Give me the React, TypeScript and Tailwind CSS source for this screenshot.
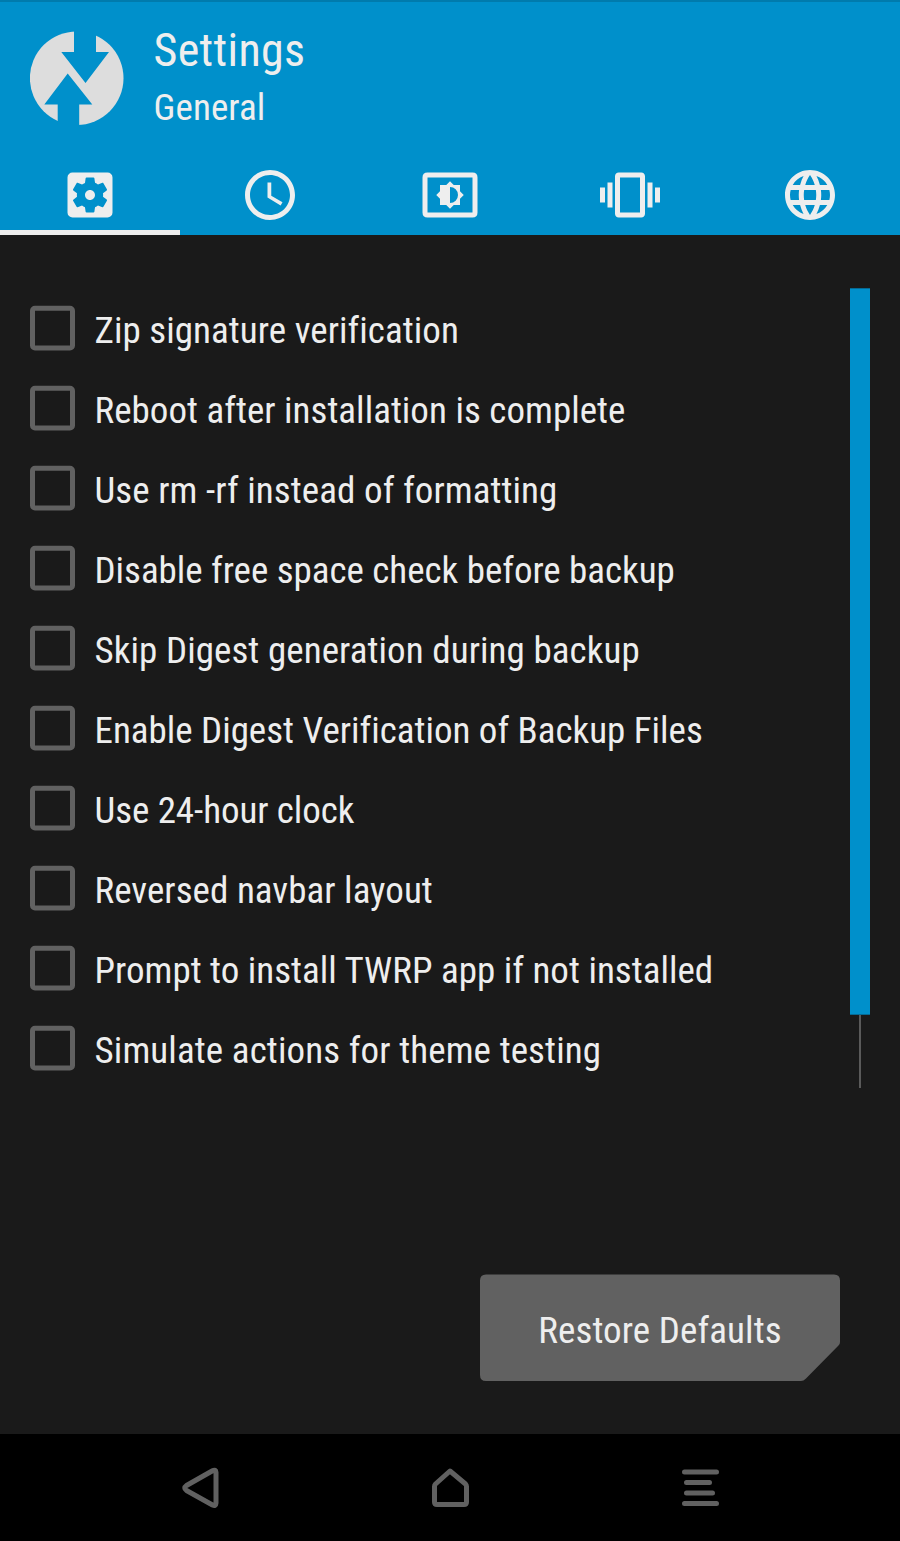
import type { ReactNode } from "react";
import {
  MdAccessTime,
  MdLanguage,
  MdSettingsApplications,
  MdVibration,
} from "react-icons/md";

const options = [
  { label: "Zip signature verification", tracking: "tracking-[0.05px]" },
  { label: "Reboot after installation is complete", tracking: "tracking-[0.02px]" },
  { label: "Use rm -rf instead of formatting", tracking: "tracking-[0.07px]" },
  { label: "Disable free space check before backup", tracking: "tracking-[-0.03px]" },
  { label: "Skip Digest generation during backup", tracking: "tracking-[0.07px]" },
  { label: "Enable Digest Verification of Backup Files", tracking: "tracking-[-0.01px]" },
  { label: "Use 24-hour clock", tracking: "tracking-[-0.08px]" },
  { label: "Reversed navbar layout", tracking: "tracking-[0.04px]" },
  { label: "Prompt to install TWRP app if not installed", tracking: "tracking-[0.01px]" },
  { label: "Simulate actions for theme testing", tracking: "tracking-[0.1px]" },
];

function BrightnessIcon() {
  return (
    <svg width="60" height="60" viewBox="0 0 24 24" fill="currentColor" fillRule="evenodd">
      <path d="M3 3H21Q23 3 23 5V19Q23 21 21 21H3Q1 21 1 19V5Q1 3 3 3ZM3 5V19H21V5Z" />
      <path d="M8 16H10.500L12 17.500L13.500 16H16V13.500L17.500 12L16 10.500V8H13.500L12 6.500L10.500 8H8V10.500L6.500 12L8 13.500ZM12 8.800A3.200 3.200 0 0 1 12 15.200Z" />
    </svg>
  );
}

const tabs: { name: string; icon: ReactNode }[] = [
  { name: "General", icon: <MdSettingsApplications size={60} /> },
  { name: "Time zone", icon: <MdAccessTime size={60} /> },
  { name: "Screen", icon: <BrightnessIcon /> },
  { name: "Vibration", icon: <MdVibration size={60} /> },
  { name: "Language", icon: <MdLanguage size={60} /> },
];

function Logo() {
  return (
    <svg className="mt-[31px] ml-[30px] size-[94px] shrink-0" viewBox="30 31 94 94">
      <circle cx="76.7" cy="78.2" r="46.8" fill="#dddddd" />
      <path d="M74 28H96V52H109L85.5 83L61.3 52H74Z" fill="#0090cb" />
      <path d="M67.7 73.5L92.3 104.5H79.2V128H57.7V104.5H44.3Z" fill="#0090cb" />
    </svg>
  );
}

export default function App() {
  return (
    <div className="flex h-[1541px] w-[900px] flex-col overflow-hidden bg-[#1a1a1a] font-['Roboto_Condensed','Roboto',sans-serif] text-[37px] text-[#eeeeee] [font-stretch:75%] [font-variant-ligatures:none]">
      <header className="flex h-[235px] flex-col border-t-2 border-[#007bad] bg-[#0090cb]">
        <div className="-mt-0.5 flex h-[165px]">
          <Logo />
          <div className="ml-[29.5px] flex flex-col items-start whitespace-nowrap">
            <h1 className="mt-[22px] h-[56px] text-[46px] leading-[56px] tracking-[0.35px]">Settings</h1>
            <h2 className="mt-[8px] h-[44px] leading-[44px] tracking-[0.1px]">General</h2>
          </div>
        </div>
        <nav className="grid h-[70px] grid-cols-5">
          {tabs.map((tab, i) => (
            <button
              key={tab.name}
              aria-label={tab.name}
              className={
                i === 0
                  ? "flex justify-center border-b-5 border-[#eeeeee]"
                  : "flex justify-center border-b-5 border-transparent"
              }
            >
              {tab.icon}
            </button>
          ))}
        </nav>
      </header>

      <main className="flex h-[853px] shrink-0 justify-between px-[30px] pt-[53px]">
        <ul>
          {options.map(({ label, tracking }) => (
            <li key={label} className="flex h-20 items-center gap-[19.5px]">
              <svg width="45" height="46" fill="none" stroke="#616161" strokeWidth="5">
                <rect x="2.500" y="3.200" width="40" height="39.800" rx="2.500" />
              </svg>
              <span className={`pt-[6px] leading-[44px] whitespace-nowrap ${tracking}`}>{label}</span>
            </li>
          ))}
        </ul>
        <div className="flex h-[800px] w-5 flex-col items-center">
          <div className="h-[727px] w-5 border-y border-[#056a94] bg-[#0090cb]" />
          <div className="w-0.5 grow bg-[#5a5a5a]" />
        </div>
      </main>

      <div className="flex h-[346px] shrink-0 justify-end pt-[186px] pr-[60px]">
        <button className="grid h-[107px] w-[360px] place-items-center">
          <svg className="col-start-1 row-start-1" width="360" height="107" viewBox="0 0 360 107">
            <path
              d="M6 .5H354Q360 .5 360 6.5V68Q360 70 358.500 71.500L326 104.500Q323.500 107 321 107H6Q0 107 0 101V6.500Q0 .5 6 .5Z"
              fill="#616161"
            />
          </svg>
          <span className="col-start-1 row-start-1 mt-1.5 tracking-[0.1px] whitespace-nowrap">Restore Defaults</span>
        </button>
      </div>

      <footer className="flex h-[107px] shrink-0 bg-black pl-[160px]">
        <svg className="mt-4 mr-[170px]" width="80" height="80" fill="none" stroke="#616161" strokeWidth="5" strokeLinejoin="round" strokeLinecap="round">
          <path d="M52.500 20.800Q55.800 19 56 22.500V53Q55.800 56.500 52.500 55L26.500 40.500Q23 38 26.500 35.500Z" />
        </svg>
        <svg className="mt-4 mr-[170px]" width="80" height="80" fill="none" stroke="#616161" strokeWidth="5" strokeLinejoin="round">
          <path d="M40 21L25.500 34Q24.500 35 24.500 36.500V52Q24.500 54.500 27 54.500H54Q56.500 54.500 56.500 52V36.500Q56.500 35 55.500 34Z" />
        </svg>
        <svg className="mt-4" width="80" height="80" stroke="#616161" strokeWidth="5" strokeLinecap="round">
          <path d="M24.500 22H56.500M26.500 32.500H49.500M26.500 43H52.500M24.500 53.500H56.500" />
        </svg>
      </footer>
    </div>
  );
}
